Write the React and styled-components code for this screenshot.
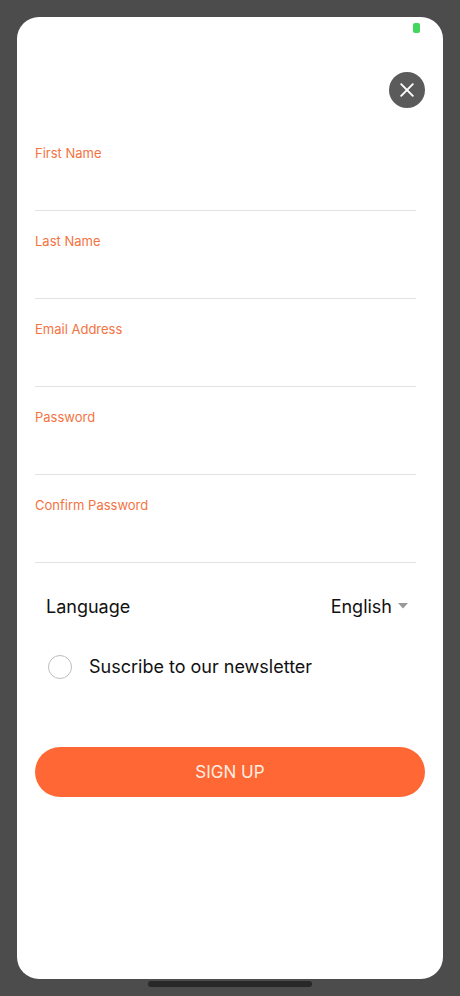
import React from "react";
import styled, { createGlobalStyle } from "styled-components";

const GlobalStyle = createGlobalStyle`
  *, *::before, *::after { box-sizing: border-box; }
  body {
    margin: 0;
    background: #4c4c4c;
    font-family: Inter, "Liberation Sans", sans-serif;
    color: #111111;
  }
  button, input, select { font: inherit; color: inherit; }
`;

const Screen = styled.div`
  display: flex;
  flex-direction: column;
  min-height: 100vh;
  padding: 17px 17px 9px;
`;

const Sheet = styled.main`
  flex: 1;
  display: flex;
  flex-direction: column;
  padding: 6px 18px 32px;
  border-radius: 22px;
  background: #ffffff;
`;

const StatusBar = styled.div`
  display: flex;
  justify-content: flex-end;
  height: 49px;
  padding-right: 5px;
`;

const CameraIndicator = styled.span`
  width: 7px;
  height: 10px;
  border-radius: 2px;
  background: #41d65c;
`;

const CloseButton = styled.button`
  display: grid;
  place-items: center;
  align-self: flex-end;
  width: 36px;
  height: 36px;
  padding: 0;
  border: 0;
  border-radius: 50%;
  background: #5b5b5b;
  color: #ffffff;
  cursor: pointer;
`;

const Form = styled.form`
  display: flex;
  flex-direction: column;
  margin-top: 36px;
`;

const Fields = styled.div`
  display: flex;
  flex-direction: column;
  gap: 21px;
  margin-right: 9px;
`;

const Field = styled.div`
  display: flex;
  flex-direction: column;
`;

const FieldLabel = styled.label`
  font-size: 13px;
  line-height: 18px;
  color: #f4733f;
`;

const FieldInput = styled.input`
  width: 100%;
  height: 49px;
  padding: 12px 0 0;
  border: 0;
  border-bottom: 1px solid #e2e2e4;
  background: transparent;
  font-size: 18px;
  outline: none;
`;

const LanguageRow = styled.div`
  display: flex;
  align-items: center;
  justify-content: space-between;
  margin-top: 29px;
  padding: 0 17px 0 11px;
  font-size: 18px;
  line-height: 30px;
`;

const SelectWrap = styled.div`
  display: flex;
  align-items: center;
  gap: 6px;
`;

const LanguageSelect = styled.select`
  height: 30px;
  padding: 0;
  border: 0;
  background: transparent;
  appearance: none;
  text-align-last: right;
  cursor: pointer;
`;

const NewsletterRow = styled.label`
  display: flex;
  align-items: center;
  gap: 17px;
  margin-top: 30px;
  padding-left: 13px;
  font-size: 18px;
  line-height: 30px;
  cursor: pointer;
`;

const RoundCheckbox = styled.input`
  appearance: none;
  width: 24px;
  height: 24px;
  margin: 0;
  border: 1px solid #bdbdbd;
  border-radius: 50%;
  background: #ffffff;

  &:checked {
    border: 7px solid #ff6633;
  }
`;

const SubmitButton = styled.button`
  height: 50px;
  margin-top: 65px;
  border: 0;
  border-radius: 25px;
  background: #ff6734;
  color: #ffeee0;
  font-size: 17px;
  cursor: pointer;
`;

const HomeIndicator = styled.div`
  align-self: center;
  width: 164px;
  height: 6px;
  margin-top: 2px;
  border-radius: 3px;
  background: #282828;
`;

const fields = [
  { id: "first-name", label: "First Name", type: "text" },
  { id: "last-name", label: "Last Name", type: "text" },
  { id: "email", label: "Email Address", type: "email" },
  { id: "password", label: "Password", type: "password" },
  { id: "confirm-password", label: "Confirm Password", type: "password" },
];

export default function App() {
  return (
    <>
      <GlobalStyle />
      <Screen>
        <Sheet>
          <StatusBar>
            <CameraIndicator />
          </StatusBar>
          <CloseButton type="button" aria-label="Close">
            <svg width="14" height="14" viewBox="0 0 14 14" fill="none" stroke="currentColor" strokeWidth="1.9" strokeLinecap="round" aria-hidden="true">
              <path d="M1.2 1.2 12.8 12.8M12.8 1.2 1.2 12.8" />
            </svg>
          </CloseButton>
          <Form onSubmit={(event) => event.preventDefault()}>
            <Fields>
              {fields.map(({ id, label, type }) => (
                <Field key={id}>
                  <FieldLabel htmlFor={id}>{label}</FieldLabel>
                  <FieldInput id={id} name={id} type={type} />
                </Field>
              ))}
            </Fields>
            <LanguageRow>
              <label htmlFor="language">Language</label>
              <SelectWrap>
                <LanguageSelect id="language" name="language" defaultValue="en">
                  <option value="en">English</option>
                </LanguageSelect>
                <svg width="10" height="8" viewBox="0 0 10 8" aria-hidden="true">
                  <path d="M0 0h10L5 5.5z" fill="#999999" />
                </svg>
              </SelectWrap>
            </LanguageRow>
            <NewsletterRow>
              <RoundCheckbox type="checkbox" name="newsletter" />
              Suscribe to our newsletter
            </NewsletterRow>
            <SubmitButton type="submit">SIGN UP</SubmitButton>
          </Form>
        </Sheet>
        <HomeIndicator />
      </Screen>
    </>
  );
}
